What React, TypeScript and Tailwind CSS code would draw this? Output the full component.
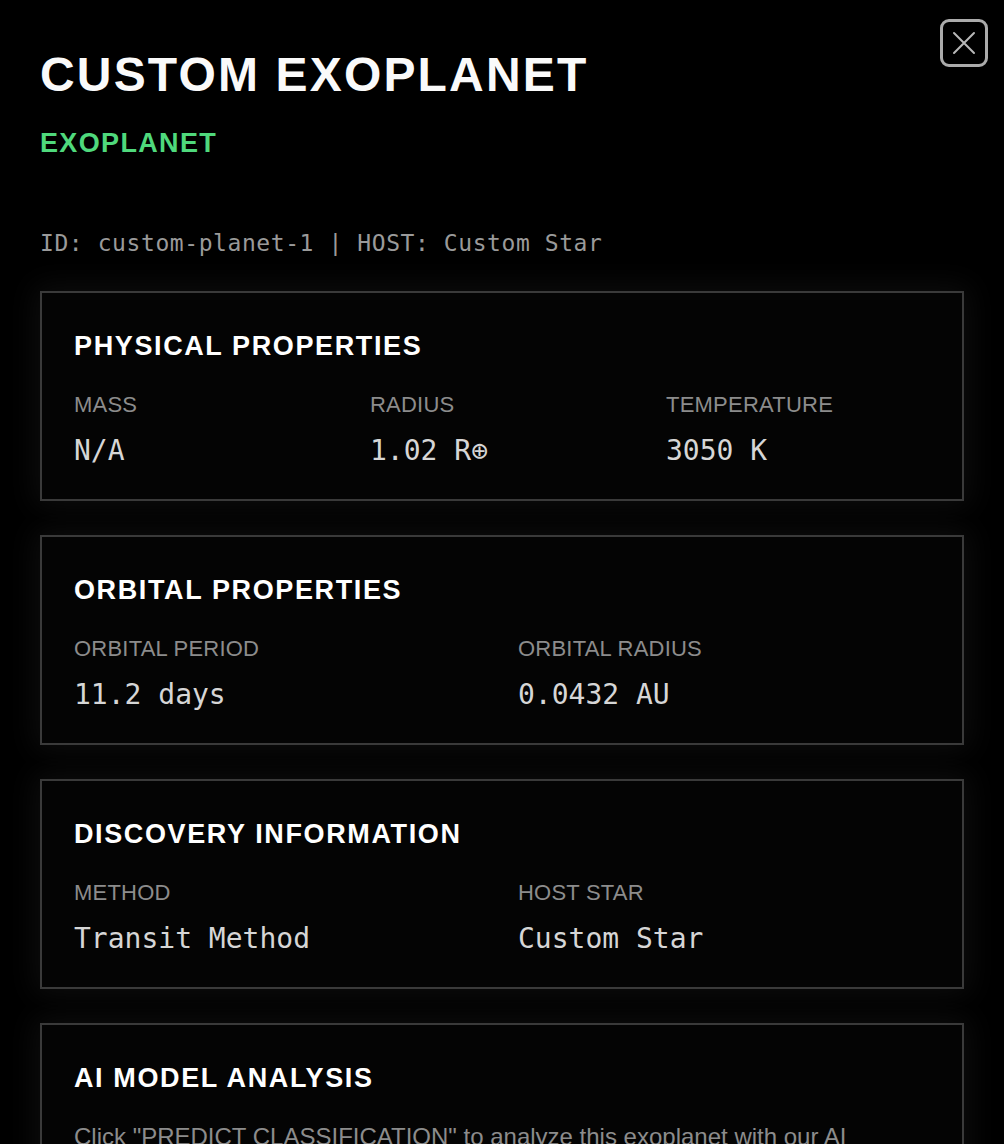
import React from 'react';

type Field = { label: string; value: string };

const sans = "font-['Liberation_Sans',Arial,sans-serif]";
const mono = "font-['DejaVu_Sans_Mono','Liberation_Mono',monospace]";

function Section({
  title,
  fields,
  cols,
  children,
}: {
  title: string;
  fields?: Field[];
  cols?: 2 | 3;
  children?: React.ReactNode;
}) {
  return (
    <section className="border-2 border-[#3a3a3a] bg-[#040404] px-8 pt-[36px] pb-[30px] shadow-[0_0_28px_6px_rgba(255,255,255,0.05)]">
      <h3 className={`${sans} text-[27px] leading-[34px] font-bold tracking-[0.06em] text-white`}>
        {title}
      </h3>
      {fields && (
        <div className={`mt-7 grid gap-x-8 ${cols === 3 ? 'grid-cols-3' : 'grid-cols-2'}`}>
          {fields.map((f) => (
            <div key={f.label}>
              <div className={`${sans} text-[22px] leading-[28px] tracking-[0.01em] text-[#8c8c8c]`}>
                {f.label}
              </div>
              <div className={`${mono} mt-[14px] text-[28px] leading-[36px] text-[#d6d6d6]`}>
                {f.value}
              </div>
            </div>
          ))}
        </div>
      )}
      {children}
    </section>
  );
}

export default function App() {
  return (
    <div className="relative min-h-screen bg-black px-10 pt-[51px] pb-10">
      {/* close button */}
      <button className="absolute top-[19px] right-4 flex h-12 w-12 items-center justify-center rounded-[9px] border-[3px] border-[#ababab] bg-black">
        <svg width="24" height="24" viewBox="0 0 24 24" fill="none">
          <path d="M2 2 L22 22 M22 2 L2 22" stroke="#b8b8b8" strokeWidth="2" strokeLinecap="round" />
        </svg>
      </button>

      {/* header */}
      <h1 className={`${sans} text-5xl leading-none font-bold tracking-[0.045em] text-[#fafafa]`}>
        CUSTOM EXOPLANET
      </h1>
      <h2 className={`${sans} mt-[27px] text-[27px] leading-[34px] font-bold tracking-[0.05em] text-[#4fd97c]`}>
        EXOPLANET
      </h2>
      <p className={`${mono} mt-[66px] text-[23px] leading-[34px] tracking-[0.025em] text-[#9a9a9a]`}>
        ID: custom-planet-1 | HOST: Custom Star
      </p>

      {/* sections */}
      <div className="mt-[31px] flex flex-col gap-[34px]">
        <Section
          title="PHYSICAL PROPERTIES"
          cols={3}
          fields={[
            { label: 'MASS', value: 'N/A' },
            { label: 'RADIUS', value: '1.02 R⊕' },
            { label: 'TEMPERATURE', value: '3050 K' },
          ]}
        />
        <Section
          title="ORBITAL PROPERTIES"
          cols={2}
          fields={[
            { label: 'ORBITAL PERIOD', value: '11.2 days' },
            { label: 'ORBITAL RADIUS', value: '0.0432 AU' },
          ]}
        />
        <Section
          title="DISCOVERY INFORMATION"
          cols={2}
          fields={[
            { label: 'METHOD', value: 'Transit Method' },
            { label: 'HOST STAR', value: 'Custom Star' },
          ]}
        />
        <Section title="AI MODEL ANALYSIS">
          <p className={`${sans} mt-[26px] text-[24px] leading-[32px] text-[#8c8c8c]`}>
            Click "PREDICT CLASSIFICATION" to analyze this exoplanet with our AI machine learning
            model and determine its most likely classification.
          </p>
        </Section>
      </div>
    </div>
  );
}
